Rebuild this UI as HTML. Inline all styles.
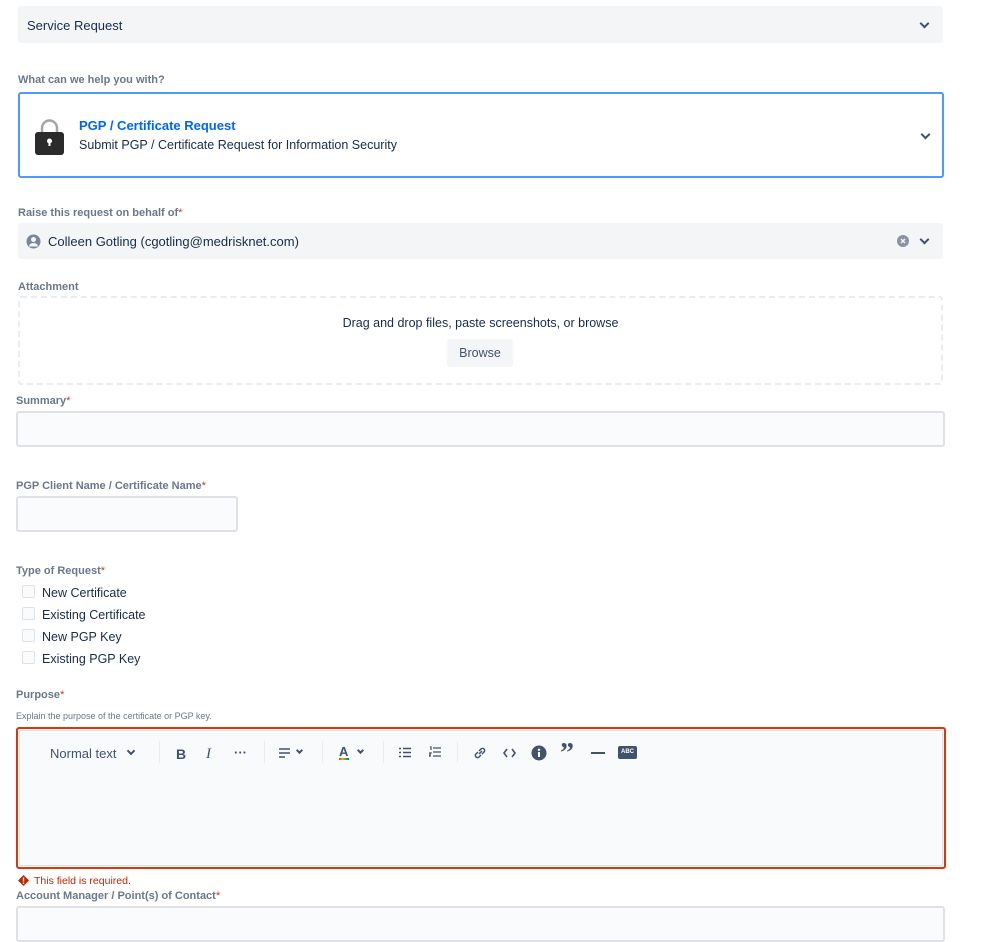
<!DOCTYPE html>
<html><head><meta charset="utf-8"><style>
body{margin:0;width:999px;height:923px;background:#fff;font-family:"Liberation Sans",sans-serif;color:#172b4d;position:relative;overflow:hidden}
.a{position:absolute}
.lbl{position:absolute;font-size:11px;font-weight:bold;color:#6b778c;line-height:12px}
.lbl b{color:#de350b;font-weight:normal}
.sel{position:absolute;left:18px;width:925px;background:#f4f5f7;border-radius:3px;font-size:13px}
.chev{position:absolute;width:5px;height:5px;border-right:2px solid #42526e;border-bottom:2px solid #42526e;transform:rotate(45deg)}
.inp{position:absolute;background:#fafbfc;border:2px solid #dfe1e6;border-radius:3px;box-sizing:border-box}
.cb{position:absolute;left:22px;width:11px;height:11px;border:1px solid #dfe1e6;background:#fafbfc;border-radius:2px}
.ct{position:absolute;left:42px;font-size:12.5px;color:#172b4d}
.tb{position:absolute;top:746px;font-size:13px;color:#42526e}
.sep{position:absolute;top:741px;width:1px;height:22px;background:#ebecf0}
</style></head><body>
<div class="sel" style="top:6px;height:37px"><span class="a" style="left:9px;top:12px">Service Request</span><div class="chev" style="left:903px;top:14px"></div></div>
<div class="lbl" style="left:18px;top:74px">What can we help you with?</div>
<div class="a" style="left:18px;top:92px;width:922px;height:82px;border:2px solid #4c9aff;border-radius:3px"></div>
<svg class="a" style="left:34px;top:118px" width="31" height="38" viewBox="0 0 31 38"><path d="M8 16V10a7.5 7.5 0 0 1 15 0v6" fill="none" stroke="#a5a5a5" stroke-width="2.5"/><rect x="1" y="14" width="29" height="23" rx="3" fill="#2b2b2b"/><circle cx="15.5" cy="23" r="2.5" fill="#fff"/><rect x="14.5" y="23" width="2" height="5" fill="#fff"/></svg>
<div class="a" style="left:79px;top:118px;font-size:13px;color:#0065ff;font-weight:bold">PGP / Certificate Request</div>
<div class="a" style="left:79px;top:138px;font-size:12.5px;color:#172b4d">Submit PGP / Certificate Request for Information Security</div>
<div class="chev" style="left:922px;top:131px"></div>
<div class="lbl" style="left:18px;top:207px">Raise this request on behalf of<b>*</b></div>
<div class="sel" style="top:223px;height:36px">
<svg class="a" style="left:8px;top:11px" width="15" height="15" viewBox="0 0 15 15"><circle cx="7.5" cy="7.5" r="7" fill="#7a869a"/><circle cx="7.5" cy="5.5" r="2.5" fill="#f4f5f7"/><path d="M3 12.5a4.5 3.5 0 0 1 9 0z" fill="#f4f5f7"/></svg>
<span class="a" style="left:30px;top:11px">Colleen Gotling (cgotling@medrisknet.com)</span>
<svg class="a" style="left:879px;top:12px" width="12" height="12" viewBox="0 0 12 12"><circle cx="6" cy="6" r="6" fill="#8993a4"/><path d="M4 4l4 4M8 4l-4 4" stroke="#f4f5f7" stroke-width="1.5"/></svg>
<div class="chev" style="left:903px;top:13px"></div></div>
<div class="lbl" style="left:18px;top:281px">Attachment</div>
<div class="a" style="left:18px;top:296px;width:921px;height:85px;border:2px dashed #ebecf0;border-radius:3px"></div>
<div class="a" style="left:0;width:961px;top:316px;text-align:center;font-size:12.5px;color:#172b4d">Drag and drop files, paste screenshots, or browse</div>
<div class="a" style="left:447px;top:339px;width:66px;height:28px;background:#f4f5f7;border-radius:3px;font-size:12.5px;color:#42526e;text-align:center;line-height:29px">Browse</div>
<div class="lbl" style="left:16px;top:395px">Summary<b>*</b></div>
<div class="inp" style="left:16px;top:411px;width:929px;height:36px"></div>
<div class="lbl" style="left:16px;top:480px">PGP Client Name / Certificate Name<b>*</b></div>
<div class="inp" style="left:16px;top:496px;width:222px;height:36px"></div>
<div class="lbl" style="left:16px;top:565px">Type of Request<b>*</b></div>
<div class="cb" style="top:585px"></div><div class="ct" style="top:586px">New Certificate</div>
<div class="cb" style="top:607px"></div><div class="ct" style="top:608px">Existing Certificate</div>
<div class="cb" style="top:629px"></div><div class="ct" style="top:630px">New PGP Key</div>
<div class="cb" style="top:651px"></div><div class="ct" style="top:652px">Existing PGP Key</div>
<div class="lbl" style="left:16px;top:689px">Purpose<b>*</b></div>
<div class="a" style="left:16px;top:711px;font-size:9px;color:#6b778c">Explain the purpose of the certificate or PGP key.</div>
<div class="a" style="left:16px;top:727px;width:926px;height:138px;border:2px solid #de350b;border-radius:3px;background:#f9fafc"><div class="a" style="left:1px;top:1px;right:1px;bottom:1px;border:1px solid #dfe1e6"></div></div>
<div class="tb" style="left:50px;color:#42526e">Normal text</div><div class="chev" style="left:128px;top:748px;width:4px;height:4px"></div>
<div class="sep" style="left:159px"></div>
<div class="tb" style="left:176px;font-weight:bold;font-size:14px">B</div>
<div class="tb" style="left:206px;font-style:italic;font-family:'Liberation Serif',serif;font-size:15px">I</div>
<div class="tb" style="left:234px;font-weight:bold;top:745px">···</div>
<div class="sep" style="left:264px"></div>
<svg class="a" style="left:279px;top:748px" width="12" height="10"><path d="M0 1h11M0 5h11M0 9h6" stroke="#42526e" stroke-width="1.6"/></svg><div class="chev" style="left:297px;top:748px;width:3px;height:3px"></div>
<div class="sep" style="left:322px"></div>
<div class="tb" style="left:339px;font-weight:bold;top:744px">A</div><div class="a" style="left:339px;top:758px;width:10px;height:2px;background:linear-gradient(90deg,#de350b,#ffab00,#36b37e,#0065ff)"></div><div class="chev" style="left:358px;top:748px;width:3px;height:3px"></div>
<div class="sep" style="left:383px"></div>
<svg class="a" style="left:399px;top:747px" width="12" height="11"><path d="M0 1.5h2M4 1.5h8M0 5.5h2M4 5.5h8M0 9.5h2M4 9.5h8" stroke="#42526e" stroke-width="1.5"/></svg>
<svg class="a" style="left:429px;top:746px" width="12" height="12"><path d="M1 1h1v3M4 2h8M4 6h8M4 10h8M0 7h2l-2 3h2" stroke="#42526e" stroke-width="1.2" fill="none"/></svg>
<div class="sep" style="left:457px"></div>
<svg class="a" style="left:473px;top:746px" width="14" height="14" viewBox="0 0 14 14"><path d="M6 8l3-3M5 6l-2 2a2 2 0 0 0 3 3l2-2M9 8l2-2a2 2 0 0 0-3-3L6 5" stroke="#42526e" stroke-width="1.5" fill="none"/></svg>
<svg class="a" style="left:503px;top:748px" width="13" height="10"><path d="M4 1L1 5l3 4M9 1l3 4-3 4" stroke="#42526e" stroke-width="1.6" fill="none"/></svg>
<svg class="a" style="left:531px;top:745px" width="16" height="16"><circle cx="8" cy="8" r="7.5" fill="#42526e"/><rect x="7" y="7" width="2" height="5" fill="#fff"/><circle cx="8" cy="4.8" r="1.2" fill="#fff"/></svg>
<div class="tb" style="left:560px;top:738px;font-weight:bold;font-size:28px;font-family:'Liberation Serif',serif;letter-spacing:-1px">”</div>
<div class="a" style="left:591px;top:752px;width:14px;height:2px;background:#42526e"></div>
<div class="a" style="left:618px;top:746px;width:19px;height:13px;background:#42526e;border-radius:2px;color:#fff;font-size:6px;font-weight:bold;text-align:center;line-height:13px">ABC</div>
<svg class="a" style="left:18px;top:875px" width="11" height="11"><path d="M5.5 0L11 5.5 5.5 11 0 5.5z" fill="#bf2600"/><rect x="4.8" y="2.5" width="1.4" height="4" fill="#fff"/><rect x="4.8" y="7.5" width="1.4" height="1.4" fill="#fff"/></svg>
<div class="a" style="left:34px;top:875px;font-size:10.5px;color:#bf2600">This field is required.</div>
<div class="lbl" style="left:16px;top:890px">Account Manager / Point(s) of Contact<b>*</b></div>
<div class="inp" style="left:16px;top:906px;width:929px;height:36px"></div>
</body></html>
